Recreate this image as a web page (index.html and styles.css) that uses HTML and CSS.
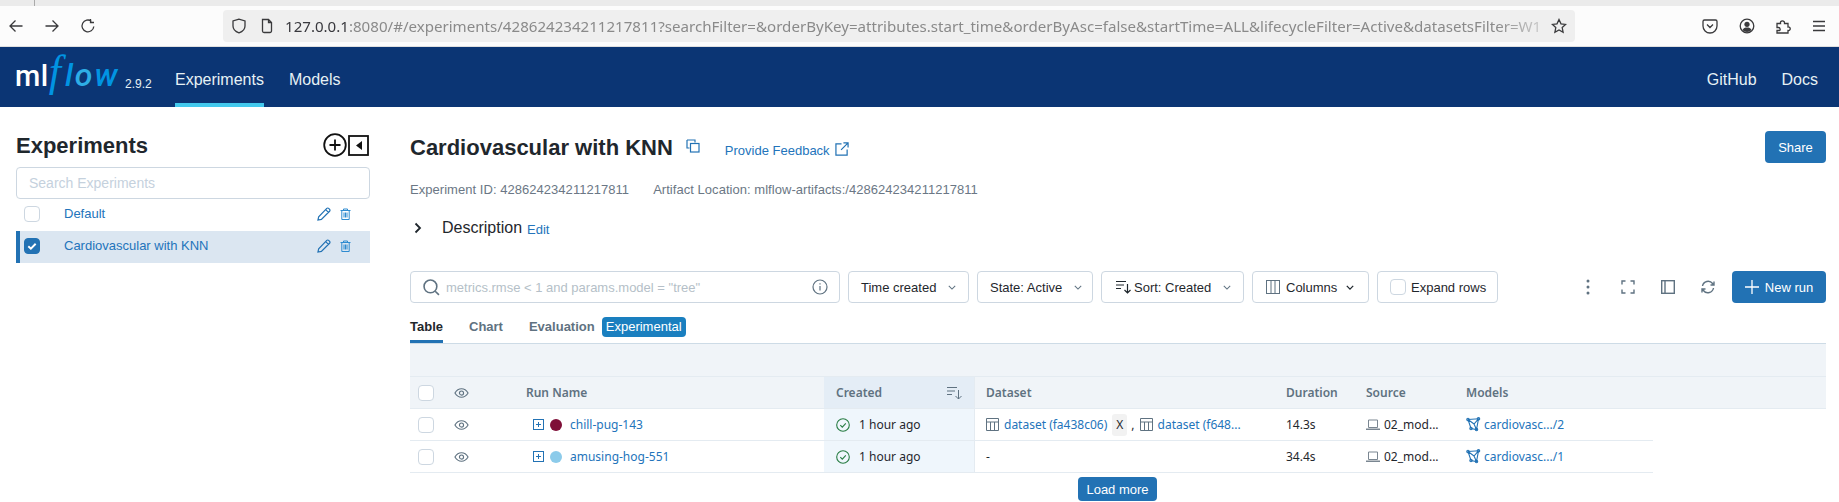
FILE: index.html
```html
<!DOCTYPE html>
<html lang="en">
<head>
<meta charset="utf-8">
<title>MLflow</title>
<link rel="stylesheet" href="styles.css">
</head>
<body>
<div class="tabstrip"><span class="tabsep"></span></div>
<div class="browserbar">
  <svg class="bicon nav-first" viewBox="0 0 16 16"><path d="M14.5 8H2M7.5 2.500 2 8l5.500 5.500"/></svg>
  <svg class="bicon nav" viewBox="0 0 16 16"><path d="M1.500 8H14M8.500 2.500 14 8l-5.500 5.500"/></svg>
  <svg class="bicon nav" viewBox="0 0 16 16"><path d="M13.800 8.500A5.900 5.900 0 1 1 11.500 3.200M10.500 1v3.500H14"/></svg>
  <div class="urlbar">
    <svg class="bicon shield" viewBox="0 0 16 16"><path d="M8 1.200 2 3v5c0 3.500 3 5.800 6 6.800 3-1 6-3.300 6-6.800V3z"/></svg>
    <svg class="bicon page-icon" viewBox="0 0 16 16"><path d="M3.500 1.500h6l3 3V13a1.500 1.500 0 0 1-1.500 1.500H5A1.500 1.500 0 0 1 3.500 13zM9.500 1.500v3h3"/></svg>
    <span class="url"><b>127.0.0.1</b>:8080/#/experiments/428624234211217811?searchFilter=&amp;orderByKey=attributes.start_time&amp;orderByAsc=false&amp;startTime=ALL&amp;lifecycleFilter=Active&amp;datasetsFilter=W1</span>
    <svg class="bicon star" viewBox="0 0 16 16"><path d="M8 1.500l2 4.300 4.600.6-3.400 3.200.9 4.700L8 12l-4.100 2.300.9-4.700L1.400 6.400 6 5.800z"/></svg>
  </div>
  <svg class="bicon pocket" viewBox="0 0 16 16"><path d="M2.500 2h11A1.500 1.500 0 0 1 15 3.500V8a7 7 0 0 1-14 0V3.500A1.500 1.500 0 0 1 2.500 2zM5 6.500l3 3 3-3"/></svg>
  <svg class="bicon account" viewBox="0 0 16 16"><circle cx="8" cy="8" r="6.800"/><circle class="solid" cx="8" cy="6.300" r="2.600"/><path class="solid" d="M3.500 12c1-2 2.500-2.500 4.500-2.500s3.500.5 4.500 2.500c-1.200 1.300-2.800 2-4.500 2s-3.300-.7-4.500-2z"/></svg>
  <svg class="bicon puzzle" viewBox="0 0 16 16"><path d="M2 5.500h3.500c-.8-3.500 4.500-3.500 4 0H13V9c3-.5 3 4 0 3.500V15H2v-2.500h2.500c1 0 1-3-1-3H2z"/></svg>
  <svg class="bicon burger" viewBox="0 0 16 16"><path d="M2 3.500h12M2 8h12M2 12.500h12"/></svg>
</div>

<header class="topnav">
  <div class="logo"><span class="logo-ml">ml</span><span class="logo-f">f</span><span class="logo-low">l<span class="logo-o">o</span>w</span></div>
  <span class="version">2.9.2</span>
  <a class="navlink active">Experiments</a>
  <a class="navlink">Models</a>
  <span class="spacer"></span>
  <a class="navlink">GitHub</a>
  <a class="navlink">Docs</a>
</header>

<div class="page">
  <aside class="sidebar">
    <div class="side-head">
      <h2>Experiments</h2>
      <svg class="add-icon" viewBox="0 0 24 24"><circle cx="12" cy="12" r="10.800"/><path d="M12 6.500v11M6.500 12h11"/></svg>
      <svg class="collapse-icon" viewBox="0 0 21 21"><rect x="1" y="1" width="19" height="19"/><path class="solid" d="M14 6v9l-6-4.500z"/></svg>
    </div>
    <div class="side-search">Search Experiments</div>
    <div class="exp-row">
      <span class="check"></span>
      <span class="exp-name">Default</span>
      <svg class="pen" viewBox="0 0 15 15"><path d="M1 14l.8-3.600L10.500 1.500a1.400 1.400 0 0 1 2 0l1 1a1.400 1.400 0 0 1 0 2L4.700 13.200z M9.300 2.800l3 3"/></svg>
      <svg class="trash" viewBox="0 0 11 12"><path d="M.5 2.500h10M3.500 2.500V1h4v1.500M1.800 2.500v9h7.400v-9M4 4.500v5M5.500 4.500v5M7 4.500v5"/></svg>
    </div>
    <div class="exp-row selected">
      <span class="check checked"><svg viewBox="0 0 16 16"><path d="M3.800 8.300l2.900 2.800 5.500-5.700"/></svg></span>
      <span class="exp-name">Cardiovascular with KNN</span>
      <svg class="pen" viewBox="0 0 15 15"><path d="M1 14l.8-3.600L10.500 1.500a1.400 1.400 0 0 1 2 0l1 1a1.400 1.400 0 0 1 0 2L4.700 13.200z M9.300 2.800l3 3"/></svg>
      <svg class="trash" viewBox="0 0 11 12"><path d="M.5 2.500h10M3.500 2.500V1h4v1.500M1.800 2.500v9h7.400v-9M4 4.500v5M5.500 4.500v5M7 4.500v5"/></svg>
    </div>
  </aside>

  <main class="content">
    <div class="title-row">
      <h1>Cardiovascular with KNN</h1>
      <svg class="copy" viewBox="0 0 14 14"><path d="M1 1h8v2.500M1 1v8h2.500"/><rect x="4.500" y="4.500" width="8.500" height="8.500"/></svg>
      <a class="feedback">Provide Feedback</a>
      <svg class="external" viewBox="0 0 15 15"><path d="M7 2H1v12h12V8M9 1h5v5M14 1L6.500 8.500"/></svg>
      <span class="spacer"></span>
      <button class="btn-primary share">Share</button>
    </div>
    <div class="meta-row"><span>Experiment ID: 428624234211217811</span><span>Artifact Location: mlflow-artifacts:/428624234211217811</span></div>
    <div class="desc-row">
      <svg class="chev-right" viewBox="0 0 8 12"><path d="M1.500 1.500 6 6l-4.500 4.500"/></svg>
      <span class="desc">Description</span><a class="edit">Edit</a>
    </div>

    <div class="toolbar">
      <div class="tool search-tool">
        <svg class="search-icon" viewBox="0 0 16 16"><circle cx="7" cy="7" r="6"/><path d="M11.500 11.500 15 15"/></svg>
        <span class="search-ph">metrics.rmse &lt; 1 and params.model = "tree"</span>
        <svg class="info-icon" viewBox="0 0 16 16"><circle cx="8" cy="8" r="7"/><path d="M8 7v4.500M8 4.200v1.300"/></svg>
      </div>
      <div class="tool w-time">Time created<svg class="caret" viewBox="0 0 10 6"><path d="M1 1l4 4 4-4"/></svg></div>
      <div class="tool w-state">State: Active<svg class="caret" viewBox="0 0 10 6"><path d="M1 1l4 4 4-4"/></svg></div>
      <div class="tool w-sort">
        <svg class="sort-icon" viewBox="0 0 16 14"><path d="M1 1.500h10M1 5h8M1 8.500h5M12.500 4v9M9.500 10l3 3 3-3"/></svg>
        Sort: Created<svg class="caret" viewBox="0 0 10 6"><path d="M1 1l4 4 4-4"/></svg>
      </div>
      <div class="tool w-cols">
        <svg class="cols-icon" viewBox="0 0 14 14"><rect x=".5" y=".5" width="13" height="13"/><path d="M5 .5v13M9 .5v13"/></svg>
        Columns<svg class="caret dark" viewBox="0 0 10 6"><path d="M1 1l4 4 4-4"/></svg>
      </div>
      <div class="tool w-expand"><span class="check small"></span>Expand rows</div>
      <span class="spacer"></span>
      <svg class="tool-icon kebab" viewBox="0 0 4 16"><circle class="solid" cx="2" cy="2" r="1.500"/><circle class="solid" cx="2" cy="8" r="1.500"/><circle class="solid" cx="2" cy="14" r="1.500"/></svg>
      <svg class="tool-icon full" viewBox="0 0 14 14"><path d="M1 4.500V1h3.500M9.500 1H13v3.500M13 9.500V13H9.500M4.500 13H1V9.500"/></svg>
      <svg class="tool-icon panel" viewBox="0 0 14 14"><rect x=".7" y=".7" width="12.600" height="12.600"/><path d="M4 .7v12.600"/></svg>
      <svg class="tool-icon refresh" viewBox="0 0 14 14"><path d="M1.500 6A5.700 5.700 0 0 1 11.600 3.500L13 5M12.500 8a5.700 5.700 0 0 1-10.100 2.500L1 9M13 1.500V5H9.500M1 12.500V9h3.500"/></svg>
      <button class="btn-primary newrun"><svg viewBox="0 0 14 14"><path d="M7 0v14M0 7h14"/></svg>New run</button>
    </div>

    <nav class="tabs">
      <span class="tab current">Table</span>
      <span class="tab">Chart</span>
      <span class="tab">Evaluation</span>
      <span class="pill">Experimental</span>
    </nav>
    <div class="filler"></div>

    <div class="grid grid-head">
      <div class="cell c-check"><span class="check"></span></div>
      <div class="cell c-eye"><svg class="eye" viewBox="0 0 16 12"><path d="M1 6c1.800-3 4-4.500 7-4.500S13.200 3 15 6c-1.800 3-4 4.500-7 4.500S2.800 9 1 6z"/><circle cx="8" cy="6" r="2.200"/></svg></div>
      <div class="cell c-name">Run Name</div>
      <div class="cell c-created hd-created">Created<svg class="sort-icon head" viewBox="0 0 16 14"><path d="M1 1.500h10M1 5h8M1 8.500h5M12.500 4v9M9.500 10l3 3 3-3"/></svg></div>
      <div class="cell c-data">Dataset</div>
      <div class="cell c-dur">Duration</div>
      <div class="cell c-src">Source</div>
      <div class="cell c-model">Models</div>
    </div>

    <div class="grid grid-row">
      <div class="cell c-check"><span class="check"></span></div>
      <div class="cell c-eye"><svg class="eye" viewBox="0 0 16 12"><path d="M1 6c1.800-3 4-4.500 7-4.500S13.200 3 15 6c-1.800 3-4 4.500-7 4.500S2.800 9 1 6z"/><circle cx="8" cy="6" r="2.200"/></svg></div>
      <div class="cell c-run">
        <svg class="expander" viewBox="0 0 11 11"><rect x=".5" y=".5" width="10" height="10"/><path d="M5.500 3v5M3 5.500h5"/></svg>
        <span class="dot dot-red"></span><a>chill-pug-143</a>
      </div>
      <div class="cell c-created"><svg class="ok" viewBox="0 0 14 14"><circle cx="7" cy="7" r="6.300"/><path d="M4.300 7.200l2 2 3.500-3.800"/></svg>1 hour ago</div>
      <div class="cell c-data">
        <svg class="table-icon" viewBox="0 0 13 13"><path d="M.5.500h12v12H.5zM.5 4h12M4.500 4v8.500M8.500 4v8.500"/></svg>
        <a>dataset (fa438c06)</a><span class="chip">X</span><span class="comma">,</span>
        <svg class="table-icon" viewBox="0 0 13 13"><path d="M.5.500h12v12H.5zM.5 4h12M4.500 4v8.500M8.500 4v8.500"/></svg>
        <a>dataset (f648...</a>
      </div>
      <div class="cell c-dur">14.3s</div>
      <div class="cell c-src"><svg class="laptop" viewBox="0 0 14 12"><path d="M2.500 1h9v7.500h-9z"/><path class="solid" d="M0 9.500h14V11H0z"/></svg>02_mod...</div>
      <div class="cell c-model"><svg class="model-icon" viewBox="0 0 15 15"><path d="M2 2.500 12.500 1.800 10.500 12.500 5 11.500zM2 2.500 8 7l4.500-5.200M8 7l2.500 5.500"/><circle cx="2" cy="2.500" r="1.200"/><circle cx="12.500" cy="1.800" r="1.200"/><circle cx="10.500" cy="12.500" r="1.200"/><circle cx="5" cy="11.500" r="1.200"/></svg><a>cardiovasc.../2</a></div>
    </div>

    <div class="grid grid-row">
      <div class="cell c-check"><span class="check"></span></div>
      <div class="cell c-eye"><svg class="eye" viewBox="0 0 16 12"><path d="M1 6c1.800-3 4-4.500 7-4.500S13.200 3 15 6c-1.800 3-4 4.500-7 4.500S2.800 9 1 6z"/><circle cx="8" cy="6" r="2.200"/></svg></div>
      <div class="cell c-run">
        <svg class="expander" viewBox="0 0 11 11"><rect x=".5" y=".5" width="10" height="10"/><path d="M5.500 3v5M3 5.500h5"/></svg>
        <span class="dot dot-blue"></span><a>amusing-hog-551</a>
      </div>
      <div class="cell c-created"><svg class="ok" viewBox="0 0 14 14"><circle cx="7" cy="7" r="6.300"/><path d="M4.300 7.200l2 2 3.500-3.800"/></svg>1 hour ago</div>
      <div class="cell c-data">-</div>
      <div class="cell c-dur">34.4s</div>
      <div class="cell c-src"><svg class="laptop" viewBox="0 0 14 12"><path d="M2.500 1h9v7.500h-9z"/><path class="solid" d="M0 9.500h14V11H0z"/></svg>02_mod...</div>
      <div class="cell c-model"><svg class="model-icon" viewBox="0 0 15 15"><path d="M2 2.500 12.500 1.800 10.500 12.500 5 11.500zM2 2.500 8 7l4.500-5.200M8 7l2.500 5.500"/><circle cx="2" cy="2.500" r="1.200"/><circle cx="12.500" cy="1.800" r="1.200"/><circle cx="10.500" cy="12.500" r="1.200"/><circle cx="5" cy="11.500" r="1.200"/></svg><a>cardiovasc.../1</a></div>
    </div>

    <div class="load-row"><button class="btn-primary load">Load more</button></div>
  </main>
</div>
</body>
</html>
```
FILE: styles.css
```css
* { box-sizing: border-box; }
html, body { margin: 0; padding: 0; }
body { width: 1839px; height: 502px; overflow: hidden; background: #fff; font-family: "Liberation Sans", Arial, sans-serif; font-size: 13px; color: #1f272d; }
svg { display: block; flex: none; fill: none; stroke: currentColor; }
svg .solid { fill: currentColor; stroke: none; }
.spacer { flex: 1; }
a { color: #2374bb; }

.tabstrip { height: 6px; background: #ebebeb; padding-left: 34px; }
.tabsep { display: block; width: 1px; height: 6px; background: #aaa; }
.browserbar { height: 41px; background: #fcfcfc; border-bottom: 1px solid #e0e0e0; display: flex; align-items: center; color: #3a3a3c; }
.bicon { width: 16px; height: 16px; stroke-width: 1.300; }
.nav-first { margin-left: 8px; }
.nav { margin-left: 20px; }
.urlbar { width: 1352px; height: 32px; margin-left: 127px; background: #efefef; border-radius: 4px; display: flex; align-items: center; padding-left: 8px; }
.bicon.page-icon { margin-left: 12px; }
.url { margin-left: 10px; width: 1262px; white-space: nowrap; font-family: "Noto Sans", sans-serif; font-size: 15.100px; color: #8a8a8a; -webkit-mask-image: linear-gradient(to right, #000 96%, rgba(0,0,0,.25) 100%); mask-image: linear-gradient(to right, #000 96%, rgba(0,0,0,.25) 100%); }
.url b { font-weight: 400; color: #38383d; }
.star { margin-left: 4px; }
.pocket { margin-left: 127px; }
.account { margin-left: 21px; }
.puzzle { margin-left: 20px; }
.burger { margin-left: 20px; }

.topnav { height: 60px; background: #0b3574; display: flex; align-items: center; color: #e6f1f5; }
.logo { width: 110px; margin-left: 15px; height: 60px; display: flex; align-items: baseline; white-space: nowrap; line-height: 1; padding-top: 3px; }
.logo-ml { font-family: Roboto, sans-serif; font-size: 29px; font-weight: 500; color: #fff; letter-spacing: .5px; }
.logo-f { font-family: "Liberation Serif", serif; font-size: 44px; font-style: italic; color: #0194e2; margin-right: 4px; }
.logo-low { font-family: Roboto, sans-serif; font-size: 32px; font-style: italic; font-weight: 500; color: #0194e2; letter-spacing: 2px; }
.logo-o { color: #2eaee6; }
.version { font-size: 12px; width: 50px; padding-top: 13px; color: #e6f1f5; }
.navlink { font-size: 16px; height: 60px; line-height: 66px; margin-right: 25px; color: #e6f1f5; }
.navlink.active { border-bottom: 4px solid #43c9ed; }
.navlink:last-child { margin-right: 21px; }

.page { display: flex; height: 395px; }
.sidebar { width: 410px; flex: none; padding: 19px 0 0 16px; }
.side-head { width: 354px; height: 38px; margin-bottom: 3px; display: flex; align-items: center; color: #111; }
.side-head h2 { margin: 0; padding-top: 2px; flex: 1; font-size: 22px; line-height: 32px; font-weight: 700; color: #1f272d; }
.add-icon { width: 24px; height: 24px; stroke-width: 1.800; }
.collapse-icon { width: 21px; height: 21px; stroke-width: 1.800; margin-right: 1px; margin-left: 1px; }
.side-search { width: 354px; height: 32px; border: 1px solid #cdd7e1; border-radius: 4px; padding-left: 12px; line-height: 30px; font-size: 14px; color: #c5d1dd; }
.exp-row { width: 354px; height: 32px; display: flex; align-items: center; padding-left: 8px; padding-bottom: 2px; }
.exp-row.selected { background: #dbe6f1; border-left: 4px solid #2272b4; padding-left: 4px; }
.check { display: block; flex: none; width: 16px; height: 16px; border: 1px solid #cdd7e1; border-radius: 4px; background: #fff; }
.check.checked { background: #2272b4; border-color: #2272b4; }
.check.checked svg { width: 14px; height: 14px; color: #fff; stroke-width: 2.200; }
.exp-name { margin: 0 0 1px 24px; flex: 1; color: #2374bb; font-size: 13px; }
.pen { width: 14px; height: 14px; color: #2272b4; stroke-width: 1.300; }
.trash { width: 11px; height: 12px; color: #2e8bd0; margin: 0 19px 0 9px; stroke-width: 1; }

.content { width: 1416px; flex: none; padding-top: 24px; }
.title-row { height: 32px; display: flex; align-items: center; }
h1 { margin: 2px 0 0; font-size: 22px; line-height: 30px; font-weight: 700; color: #1f272d; }
.copy { width: 14px; height: 14px; margin: 0 0 3px 13px; color: #2272b4; stroke-width: 1.200; }
.feedback { margin-left: 25px; padding-top: 6px; }
.external { width: 14px; height: 14px; margin: 4px 0 0 5px; color: #2272b4; stroke-width: 1.300; }
.btn-primary { display: flex; align-items: center; justify-content: center; border: 0; border-radius: 4px; background: #2272b4; color: #fff; font-family: "Liberation Sans", Arial, sans-serif; font-size: 13px; }
.share { width: 61px; height: 32px; }
.meta-row { margin-top: 18px; height: 18px; line-height: 18px; color: #6b7785; display: flex; gap: 24px; letter-spacing: .04px; }
.desc-row { margin-top: 18px; height: 22px; display: flex; align-items: center; }
.chev-right { width: 8px; height: 12px; margin-left: 4px; stroke-width: 1.800; color: #1f272d; }
.desc { font-size: 16px; margin-left: 20px; }
.edit { margin-left: 5px; padding-top: 2px; }

.toolbar { margin-top: 32px; height: 32px; display: flex; align-items: center; gap: 8px; }
.tool { height: 32px; border: 1px solid #cdd7e1; border-radius: 4px; display: flex; align-items: center; padding-left: 12px; color: #1f272d; white-space: nowrap; }
.search-tool { width: 430px; }
.search-icon { width: 17px; height: 17px; color: #5f7281; stroke-width: 1.500; }
.search-ph { margin-left: 6px; flex: 1; color: #b5bfc8; }
.info-icon { width: 16px; height: 16px; margin-right: 11px; color: #5f7281; stroke-width: 1.200; }
.w-time { width: 121px; }
.w-state { width: 116px; }
.w-sort { width: 143px; padding-left: 13px; }
.w-cols { width: 117px; padding-left: 13px; }
.w-expand { width: 121px; }
.caret { width: 8px; height: 5px; margin-left: 12px; color: #5f7281; stroke-width: 1.300; }
.caret.dark { color: #1f272d; margin-left: 9px; stroke-width: 1.600; }
.sort-icon { width: 16px; height: 14px; margin-right: 3px; color: #1f272d; stroke-width: 1.200; }
.cols-icon { width: 14px; height: 14px; margin-right: 6px; color: #5f7281; stroke-width: 1; }
.check.small { margin-right: 5px; }
.tool-icon { color: #5f7281; stroke-width: 1.400; }
.kebab { width: 4px; height: 16px; margin-right: 23px; }
.full { width: 14px; height: 14px; margin-right: 18px; }
.panel { width: 14px; height: 14px; margin-right: 18px; }
.refresh { width: 14px; height: 14px; margin-right: 9px; }
.newrun { width: 94px; height: 32px; gap: 6px; }
.newrun svg { width: 14px; height: 14px; color: #fff; stroke-width: 1.300; }

.tabs { height: 41px; padding-top: 14px; border-bottom: 1px solid #cddbe6; display: flex; align-items: flex-start; }
.tab { height: 26px; line-height: 20px; margin-right: 26px; font-weight: 700; font-size: 13px; color: #5f7281; }
.tab.current { color: #1f272d; border-bottom: 3px solid #2272b4; }
.tab:nth-child(3) { margin-right: 7px; }
.pill { height: 20px; width: 84px; line-height: 20px; text-align: center; background: #1a7fbf; border-radius: 4px; color: #fff; }
.filler { height: 32px; background: #f0f4f8; }

.grid { display: grid; grid-template-columns: 41px 65px 308px 151px 301px 80px 100px 197px; font-family: "Noto Sans", sans-serif; font-size: 12px; }
.cell { display: flex; align-items: center; white-space: nowrap; min-width: 0; }
.grid-head { width: 1416px; height: 33px; background: #f0f4f8; border-top: 1px solid #e4ebf1; border-bottom: 1px solid #e4ebf1; font-weight: 600; color: #5f7281; }
.grid-row { width: 1243px; height: 32px; border-bottom: 1px solid #e4ebf1; color: #1f272d; }
.c-check { padding-left: 8px; }
.c-eye { padding-left: 3px; }
.eye { width: 15px; height: 12px; color: #5f7281; stroke-width: 1.200; }
.c-name { padding-left: 10px; }
.c-run { padding-left: 17px; }
.c-run a { margin-left: 8px; }
.expander { width: 11px; height: 11px; color: #2272b4; stroke-width: 1; }
.dot { display: block; flex: none; width: 12px; height: 12px; border-radius: 50%; margin-left: 6px; }
.dot-red { background: #7f0f38; }
.dot-blue { background: #8ccbea; }
.c-created { padding-left: 12px; background: #eff6fc; border-right: 1px solid #e4ebf1; }
.hd-created { background: #e4edf6; }
.sort-icon.head { margin: 0 12px 0 auto; color: #5f7281; stroke-width: 1; }
.ok { width: 14px; height: 14px; margin-right: 9px; color: #277c43; stroke-width: 1.100; }
.c-data { padding-left: 11px; }
.table-icon { width: 13px; height: 13px; margin-right: 5px; color: #5f7281; stroke-width: 1; }
.chip { display: block; width: 15px; height: 22px; line-height: 22px; text-align: center; margin-left: 5px; background: #f2f2f2; border-radius: 3px; }
.comma { margin: 0 5px 0 4px; }
.c-dur, .c-src, .c-model { padding-left: 10px; }
.laptop { width: 14px; height: 12px; margin-right: 4px; color: #7a8691; stroke-width: 1; }
.model-icon { width: 15px; height: 15px; margin-right: 3px; color: #2272b4; stroke-width: 1.100; }
.load-row { width: 1243px; padding: 4px 0 0 668px; }
.load { width: 79px; height: 24px; }
```
